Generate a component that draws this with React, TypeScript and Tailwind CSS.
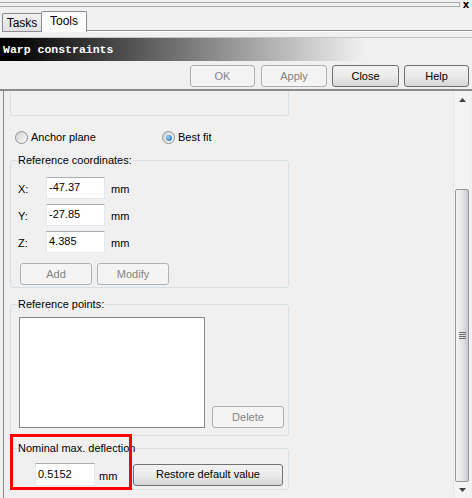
import React from "react";

const btnEnabled =
    "h-[22px] rounded-[3px] border border-[#707070] bg-gradient-to-b from-[#f2f2f2] via-[#ebebeb] to-[#d6d6d6] text-black flex items-center justify-center";
const btnDisabled =
    "h-[22px] rounded-[3px] border border-[#adb2b5] bg-[#f4f4f4] text-[#838383] flex items-center justify-center";

function Radio({ checked }: { checked?: boolean }) {
    return (
        <span className="w-[13px] h-[13px] rounded-full border border-[#8e8f8f] bg-gradient-to-br from-[#cfcfcf] to-[#fbfbfb] flex items-center justify-center shrink-0">
            {checked && (
                <span className="w-[6px] h-[6px] rounded-full bg-[radial-gradient(circle_at_35%_35%,#8fd0ff,#1a5fb4)]" />
            )}
        </span>
    );
}

function Field({ value }: { value: string }) {
    return (
        <div className="h-[22px] bg-white border border-[#e3e9ef] border-t-[#abadb3] pl-[2px] pt-[3px] leading-[13px]">
            {value}
        </div>
    );
}

function CoordRow({ axis, value }: { axis: string; value: string }) {
    return (
        <div className="flex items-center h-[22px]">
            <span className="w-[28px] pt-[3px]">{axis}:</span>
            <div className="w-[59px]">
                <Field value={value} />
            </div>
            <span className="ml-[6px] pt-[3px]">mm</span>
        </div>
    );
}

export default function App() {
    return (
        <div className="w-[472px] h-[498px] overflow-hidden bg-[#f0f0f0] font-['Liberation_Sans',Arial,sans-serif] text-[11px] text-black flex flex-col">
            {/* Top strip */}
            <div className="h-[10px] flex shrink-0">
                <div className="flex-1 mt-[2px] h-[5px] border-y border-[#a8a8a8] border-r" />
                <div className="w-[12px] h-[9px] flex items-center justify-center font-bold text-[10px] leading-none font-['DejaVu_Sans',sans-serif]">
                    x
                </div>
            </div>

            {/* Tabs */}
            <div className="h-[22px] flex items-end pl-[2px] shrink-0">
                <div className="w-[39px] h-[19px] border border-[#898c95] border-r-0 rounded-tl-[2px] bg-gradient-to-b from-[#f2f2f2] to-[#e0e0e0] flex items-center justify-center text-[12px]">
                    Tasks
                </div>
                <div className="w-[46px] h-[21px] border border-b-0 border-[#898c95] rounded-t-[2px] bg-[#fcfcfc] flex items-center justify-center text-[12px] pb-[2px]">
                    Tools
                </div>
                <div className="flex-1 h-[2px] border-b border-t border-t-[#898c95] border-b-white bg-[#fcfcfc]" />
            </div>

            {/* Title bar */}
            <div className="mt-[5px] h-[24px] border-t border-[#c4c4c4] bg-[linear-gradient(to_right,#000_2%,#f0f0f0_77%)] flex items-center pl-[3px] shrink-0">
                <span className="font-['Liberation_Mono',monospace] font-bold text-white text-[11.5px] leading-none">
                    Warp constraints
                </span>
            </div>

            {/* Dialog buttons */}
            <div className="mt-[4px] h-[22px] flex justify-end pr-[3px] shrink-0">
                <button className={`${btnDisabled} w-[65px]`}>OK</button>
                <button className={`${btnDisabled} w-[66px] ml-[6px]`}>Apply</button>
                <button className={`${btnEnabled} w-[67px] ml-[5px]`}>Close</button>
                <button className={`${btnEnabled} w-[65px] ml-[5px]`}>Help</button>
            </div>

            <div className="mt-[2px] h-[2px] bg-[#8a8a8a] shrink-0" />

            {/* Scrolled panel */}
            <div className="flex-1 flex ml-[3px] border-l border-[#8a8a8a] min-h-0">
                <div className="flex-1 relative overflow-hidden">
                    <div className="w-[279px] ml-[6px]">
                        {/* Group scrolled off the top */}
                        <div className="h-[25px] border-x border-b border-[#d5dfe5] rounded-b-[3px]" />

                        {/* Fit mode */}
                        <div className="mt-[15px] h-[13px] flex items-center">
                            <label className="w-[147px] flex items-center gap-[3px] ml-[5px]">
                                <Radio />
                                <span>Anchor plane</span>
                            </label>
                            <label className="flex items-center gap-[3px]">
                                <Radio checked />
                                <span>Best fit</span>
                            </label>
                        </div>

                        {/* Reference coordinates */}
                        <fieldset className="mt-[10px] border border-[#d5dfe5] rounded-[3px] p-0">
                            <legend className="ml-[6px] px-[1px] leading-[12px]">Reference coordinates:</legend>
                            <div className="pl-[7px] pt-[11px] pb-[2px] flex flex-col gap-[5px]">
                                <CoordRow axis="X" value="-47.37" />
                                <CoordRow axis="Y" value="-27.85" />
                                <CoordRow axis="Z" value="4.385" />
                                <div className="flex gap-[5px] mt-[5px] ml-[2px]">
                                    <button className={`${btnDisabled} w-[72px]`}>Add</button>
                                    <button className={`${btnDisabled} w-[72px]`}>Modify</button>
                                </div>
                            </div>
                        </fieldset>

                        {/* Reference points */}
                        <fieldset className="mt-[10px] border border-[#d5dfe5] rounded-[3px] p-0">
                            <legend className="ml-[6px] px-[1px] leading-[12px]">Reference points:</legend>
                            <div className="pl-[8px] pt-[7px] pb-[7px] flex items-end gap-[7px]">
                                <div className="w-[186px] h-[111px] bg-white border border-[#828790]" />
                                <button className={`${btnDisabled} w-[72px]`}>Delete</button>
                            </div>
                        </fieldset>

                        {/* Nominal max. deflection */}
                        <div className="relative mt-[6px]">
                            <fieldset className="border border-[#d5dfe5] rounded-[3px] p-0">
                                <legend className="ml-[6px] px-[1px] leading-[12px]">Nominal max. deflection</legend>
                                <div className="pl-[24px] pt-[9px] pb-[3px] flex items-center">
                                    <div className="w-[60px]">
                                        <div className="h-[23px] bg-white border border-[#e3e9ef] border-t-[#abadb3] pl-[2px] pt-[4px] leading-[13px]">
                                            0.5152
                                        </div>
                                    </div>
                                    <span className="ml-[4px] pt-[4px] w-[34px]">mm</span>
                                    <button className={`${btnEnabled} w-[150px]`}>Restore default value</button>
                                </div>
                            </fieldset>
                            <div className="absolute left-0 top-[-8px] w-[122px] h-[56px] border-[3px] border-[#ff0000] pointer-events-none" />
                        </div>
                    </div>
                </div>

                {/* Scrollbar */}
                <div className="w-[17px] mr-[2px] bg-[#f3f3f3] border-l border-[#e6e6e6] flex flex-col">
                    <div className="h-[17px] flex items-center justify-center">
                        <svg width="7" height="4" viewBox="0 0 7 4">
                            <path d="M0 4 L3.5 0 L7 4 Z" fill="#404040" />
                        </svg>
                    </div>
                    <div className="h-[81px]" />
                    <div className="h-[293px] mx-[1px] rounded-[2px] border border-[#979797] bg-gradient-to-r from-[#f4f4f4] via-[#e6e6e6] to-[#c8c8d0] flex items-center justify-center">
                        <svg width="7" height="8" viewBox="0 0 7 8">
                            <path d="M0 0.5 H7 M0 2.5 H7 M0 4.5 H7 M0 6.5 H7" stroke="#6d6d6d" strokeWidth="1" />
                        </svg>
                    </div>
                    <div className="flex-1 flex items-center justify-center">
                        <svg width="7" height="4" viewBox="0 0 7 4">
                            <path d="M0 0 L3.5 4 L7 0 Z" fill="#404040" />
                        </svg>
                    </div>
                </div>
            </div>
        </div>
    );
}
